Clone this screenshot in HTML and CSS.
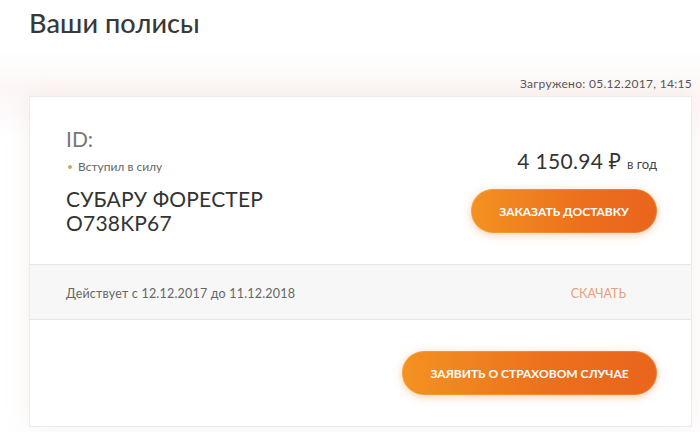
FILE: index.html
```html
<!DOCTYPE html>
<html lang="ru">
<head>
<meta charset="utf-8">
<title>Ваши полисы</title>
<link rel="stylesheet" href="styles.css">
</head>
<body>
<div class="page">
  <h1 class="title">Ваши полисы</h1>
  <div class="loaded">Загружено: 05.12.2017, 14:15</div>
  <div class="card">
    <div class="card-main">
      <div class="info">
        <div class="policy-id">ID:</div>
        <div class="status"><span class="dot"></span>Вступил в силу</div>
        <div class="car">СУБАРУ ФОРЕСТЕР<br>O738KP67</div>
      </div>
      <div class="side">
        <div class="price">4 150.94 ₽ <span class="per">в год</span></div>
        <button class="btn btn-delivery">Заказать доставку</button>
      </div>
    </div>
    <div class="card-period">
      <span class="period">Действует с 12.12.2017 до 11.12.2018</span>
      <span class="download">Скачать</span>
    </div>
    <div class="card-actions">
      <button class="btn btn-claim">Заявить о страховом случае</button>
    </div>
  </div>
</div>
</body>
</html>
```

FILE: styles.css
```css
* { box-sizing: border-box; }
html, body { margin: 0; padding: 0; }
body {
  background: #fff;
  font-family: Lato, "Noto Sans", "Open Sans", sans-serif;
  color: #333;
  width: 700px;
  height: 432px;
  overflow: hidden;
}
.page {
  padding: 6px 8px 0 29px;
  background: linear-gradient(180deg, #fff 0, #fff 50px, #fcf7f6 90px, #fff 140px);
  height: 432px;
}
.title {
  margin: 0;
  font-size: 27px;
  font-weight: 500;
  line-height: 34px;
  color: #383838;
  letter-spacing: 0.1px;
}
.loaded {
  margin-top: 36px;
  text-align: right;
  font-size: 12px;
  line-height: 16px;
  letter-spacing: 0.3px;
  color: #555;
}
.card {
  margin-top: 4px;
  width: 663px;
  height: 331px;
  background: #fff;
  border: 1px solid #ececec;
  box-shadow: 0 0 22px rgba(215, 160, 160, 0.18);
  display: flex;
  flex-direction: column;
}
.card-main {
  height: 167px;
  display: flex;
  justify-content: space-between;
  padding: 30px 34px 0 36px;
}
.policy-id {
  font-size: 21px;
  line-height: 24px;
  color: #777;
}
.status {
  margin-top: 8px;
  font-size: 12px;
  line-height: 16px;
  color: #666;
  display: flex;
  align-items: center;
}
.dot {
  width: 4px;
  height: 4px;
  border-radius: 50%;
  background: #d9a35a;
  margin: 0 6px 0 2px;
}
.car {
  margin-top: 12px;
  font-size: 21px;
  line-height: 24px;
  color: #333;
  letter-spacing: 0.2px;
}
.side {
  display: flex;
  flex-direction: column;
  align-items: flex-end;
  padding-top: 21px;
}
.price {
  font-size: 21px;
  line-height: 26px;
  color: #333;
  letter-spacing: 0.3px;
}
.per {
  font-size: 13px;
  letter-spacing: 0;
  color: #444;
}
.btn {
  border: none;
  border-radius: 22px;
  height: 44px;
  color: #fff;
  font-family: inherit;
  font-weight: 700;
  font-size: 12px;
  text-transform: uppercase;
  background: linear-gradient(90deg, #f39221 0%, #ec6f1d 60%, #e9651c 100%);
  box-shadow: 0 2px 8px rgba(240, 120, 30, 0.35), inset 0 0 0 1px rgba(255, 200, 120, 0.25);
  padding: 0;
}
.btn-delivery {
  margin-top: 12px;
  width: 186px;
}
.card-period {
  height: 56px;
  background: #f7f7f7;
  border-top: 1px solid #e6e6e6;
  border-bottom: 1px solid #e6e6e6;
  display: flex;
  align-items: center;
  justify-content: space-between;
  padding: 2px 65px 0 36px;
}
.period {
  font-size: 12.5px;
  letter-spacing: 0.2px;
  color: #666;
}
.download {
  font-size: 12.5px;
  color: #e8a07a;
  text-transform: uppercase;
}
.card-actions {
  flex: 1;
  display: flex;
  align-items: center;
  justify-content: flex-end;
  padding: 0 34px 0 0;
}
.btn-claim {
  width: 255px;
}
```
